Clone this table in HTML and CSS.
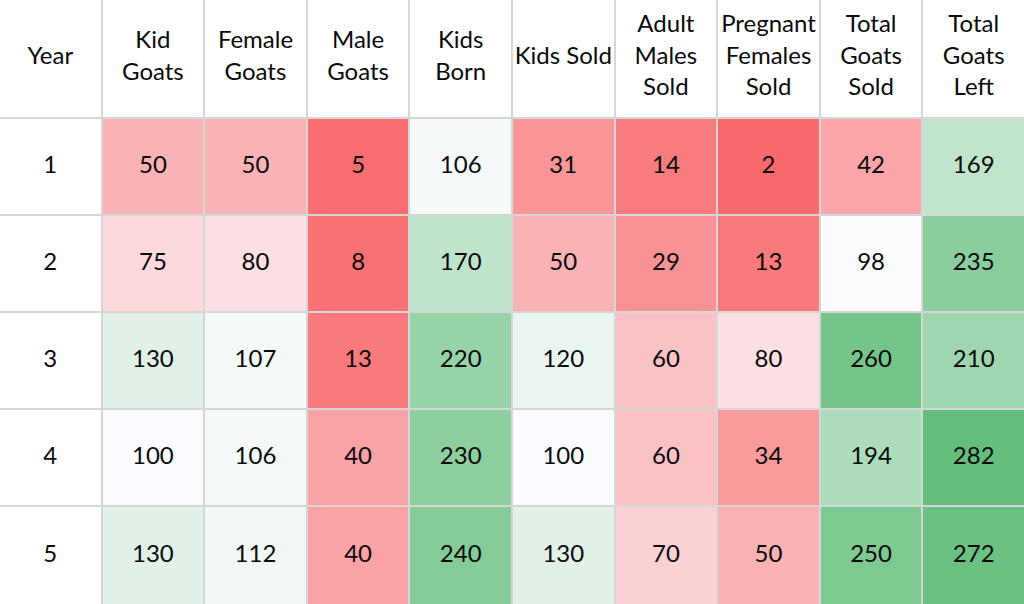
FILE: index.html
```html
<!DOCTYPE html>
<html>
<head>
<meta charset="utf-8">
<link rel="stylesheet" href="styles.css">
</head>
<body>
<div class="sheet">
  <div class="cell head">Year</div>
  <div class="cell head">Kid<br>Goats</div>
  <div class="cell head">Female<br>Goats</div>
  <div class="cell head">Male<br>Goats</div>
  <div class="cell head">Kids<br>Born</div>
  <div class="cell head">Kids Sold</div>
  <div class="cell head">Adult<br>Males<br>Sold</div>
  <div class="cell head">Pregnant<br>Females<br>Sold</div>
  <div class="cell head">Total<br>Goats<br>Sold</div>
  <div class="cell head">Total<br>Goats<br>Left</div>

  <div class="cell year">1</div>
  <div class="cell" style="background:#FAB3B5">50</div>
  <div class="cell" style="background:#FAB3B5">50</div>
  <div class="cell" style="background:#F86E70">5</div>
  <div class="cell" style="background:#F5F9F9">106</div>
  <div class="cell" style="background:#F99598">31</div>
  <div class="cell" style="background:#F87B7E">14</div>
  <div class="cell" style="background:#F8696B">2</div>
  <div class="cell" style="background:#FAA6A9">42</div>
  <div class="cell" style="background:#C1E4CC">169</div>

  <div class="cell year">2</div>
  <div class="cell" style="background:#FBD9DC">75</div>
  <div class="cell" style="background:#FBE0E3">80</div>
  <div class="cell" style="background:#F87274">8</div>
  <div class="cell" style="background:#C0E4CB">170</div>
  <div class="cell" style="background:#FAB3B5">50</div>
  <div class="cell" style="background:#F99295">29</div>
  <div class="cell" style="background:#F87A7C">13</div>
  <div class="cell" style="background:#FCFCFF">98</div>
  <div class="cell" style="background:#8ACE9D">235</div>

  <div class="cell year">3</div>
  <div class="cell" style="background:#E1F1E8">130</div>
  <div class="cell" style="background:#F5F9F8">107</div>
  <div class="cell" style="background:#F87A7C">13</div>
  <div class="cell" style="background:#97D3A8">220</div>
  <div class="cell" style="background:#EAF5EF">120</div>
  <div class="cell" style="background:#FAC2C4">60</div>
  <div class="cell" style="background:#FBE0E3">80</div>
  <div class="cell" style="background:#75C58B">260</div>
  <div class="cell" style="background:#9FD6AF">210</div>

  <div class="cell year">4</div>
  <div class="cell" style="background:#FAFBFE">100</div>
  <div class="cell" style="background:#F5F9F9">106</div>
  <div class="cell" style="background:#FAA3A6">40</div>
  <div class="cell" style="background:#8ECFA0">230</div>
  <div class="cell" style="background:#FAFBFE">100</div>
  <div class="cell" style="background:#FAC2C4">60</div>
  <div class="cell" style="background:#F99A9C">34</div>
  <div class="cell" style="background:#ACDCBA">194</div>
  <div class="cell" style="background:#63BE7B">282</div>

  <div class="cell year">5</div>
  <div class="cell" style="background:#E1F1E8">130</div>
  <div class="cell" style="background:#F0F7F5">112</div>
  <div class="cell" style="background:#FAA3A6">40</div>
  <div class="cell" style="background:#86CC99">240</div>
  <div class="cell" style="background:#E1F1E8">130</div>
  <div class="cell" style="background:#FBD1D4">70</div>
  <div class="cell" style="background:#FAB3B5">50</div>
  <div class="cell" style="background:#7EC992">250</div>
  <div class="cell" style="background:#6BC182">272</div>
</div>
</body>
</html>
```
FILE: styles.css
```css
html, body {
  margin: 0;
  padding: 0;
  background: #ffffff;
}

.sheet {
  width: 1024px;
  height: 604px;
  display: grid;
  grid-template-columns: repeat(10, 1fr);
  grid-template-rows: 117px repeat(4, 95px) 1fr;
  gap: 2px;
  background: #d6d6d6;
  font-family: Lato, "Open Sans", sans-serif;
  font-size: 24px;
  color: #0a0a0a;
}

.cell {
  display: flex;
  align-items: center;
  justify-content: center;
  text-align: center;
  background: #ffffff;
  line-height: 31.5px;
  padding-bottom: 6px;
}

.head {
  background: #ffffff;
  padding-bottom: 8px;
}

.year {
  background: #ffffff;
}
```
